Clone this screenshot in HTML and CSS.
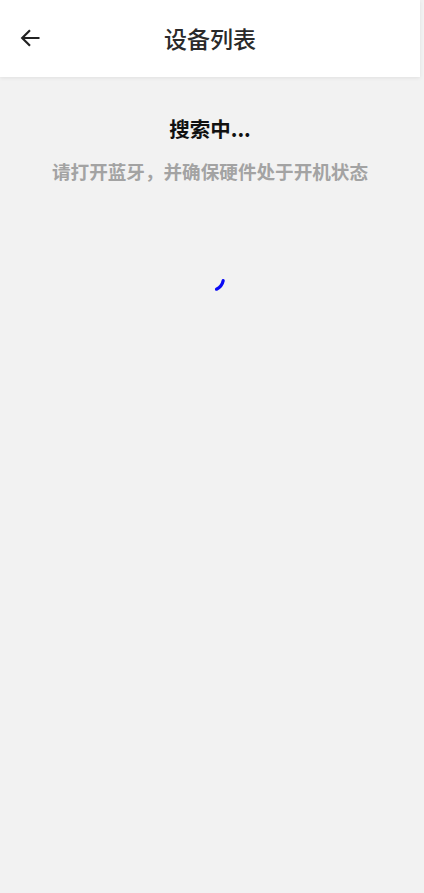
FILE: index.html
```html
<!DOCTYPE html>
<html lang="zh-CN">
<head>
<meta charset="utf-8">
<title>设备列表</title>
<link rel="stylesheet" href="styles.css">
</head>
<body>
<div class="page">
  <header class="header">
    <div class="header-left">
      <svg class="back" width="24" height="24" viewBox="0 0 24 24" aria-hidden="true">
        <path d="M21.5 12H4.5M12 4.2L4.2 12L12 19.8" fill="none" stroke="#222" stroke-width="2.2" stroke-linecap="butt" stroke-linejoin="miter"/>
      </svg>
    </div>
    <h1 class="title">设备列表</h1>
    <div class="header-right"></div>
  </header>
  <main class="content">
    <div class="status">搜索中...</div>
    <div class="hint">请打开蓝牙，并确保硬件处于开机状态</div>
    <div class="spinner">
      <svg width="40" height="40" viewBox="0 0 40 40" aria-hidden="true">
        <path d="M33.2 22.6A12.5 12.5 0 0 1 26.5 31.2" fill="none" stroke="#0a0af5" stroke-width="3.2" stroke-linecap="round"/>
      </svg>
    </div>
  </main>
</div>
</body>
</html>
```
FILE: styles.css
```css
html, body {
  margin: 0;
  padding: 0;
  background: #f2f2f2;
  height: 100%;
}
body {
  font-family: "Noto Sans CJK SC", "Noto Sans", sans-serif;
}
.page {
  width: 420px;
  min-height: 893px;
  background: #f2f2f2;
}
.header {
  height: 77px;
  background: #ffffff;
  box-shadow: 0 1px 4px rgba(0, 0, 0, 0.08);
  display: grid;
  grid-template-columns: 1fr auto 1fr;
  align-items: center;
  position: relative;
  z-index: 1;
}
.header-left {
  display: flex;
  align-items: center;
  padding-left: 18px;
  padding-bottom: 1px;
}
.back {
  display: block;
}
.title {
  margin: 0;
  font-size: 23px;
  font-weight: 500;
  color: #2a2a2a;
  line-height: 30px;
  padding-bottom: 1px;
}
.content {
  display: flex;
  flex-direction: column;
  align-items: center;
  padding-top: 37px;
}
.status {
  font-size: 20.5px;
  font-weight: 700;
  color: #111111;
  line-height: 28px;
}
.hint {
  margin-top: 16px;
  font-size: 18.6px;
  font-weight: 700;
  color: #a3a3a3;
  line-height: 26px;
}
.spinner {
  margin-top: 74px;
  width: 40px;
  height: 40px;
}
.spinner svg {
  display: block;
}
```
